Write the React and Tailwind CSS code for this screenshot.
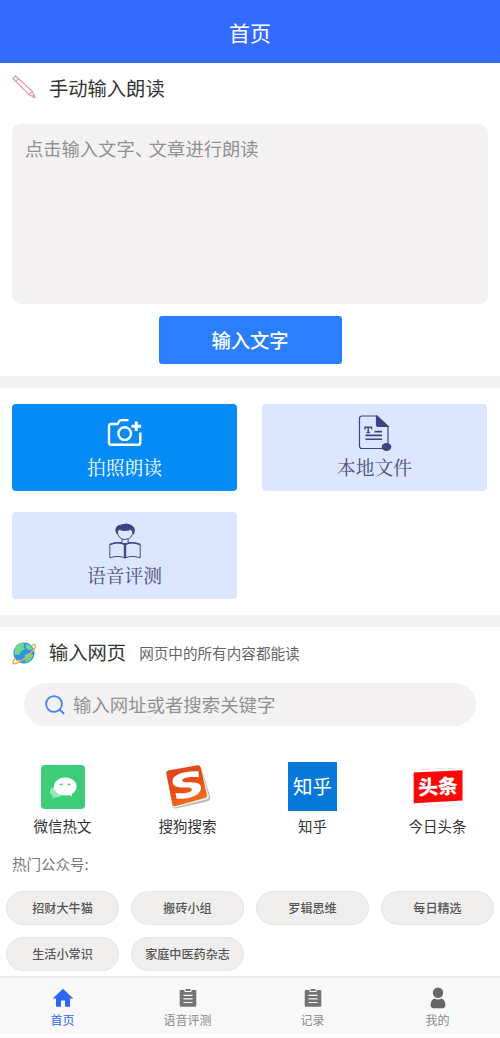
import React from 'react';

const PencilIcon = () => (
  <svg width="24" height="24" viewBox="0 0 24 24" fill="none" stroke="#e79aac" strokeWidth="1.2" strokeLinejoin="round">
    <path d="M1 3.500 3.500 1 20.500 16.500 23 22.500 17 19.700Z" />
    <path d="M3.800 6.300 6.400 3.700M17 19.700l3.500-3.200" />
    <path d="m21 20.500 2 2-2.600-.8z" fill="#d97f94" />
  </svg>
);

const CameraIcon = () => (
  <svg width="36" height="30" viewBox="0 0 36 30" fill="none" stroke="#fff" strokeWidth="2.4" strokeLinejoin="round">
    <path d="M21.500 2.100H14.200Q13 2.100 12.300 3.200L10.600 6H4.300Q2 6 2 8.300V24.500Q2 26.800 4.300 26.800H31Q33.300 26.800 33.300 24.500V14.500" />
    <circle cx="17.700" cy="15.600" r="6.300" />
    <path d="M29.300 3.500v9.500M24.500 8.200h9.600" strokeWidth="3" />
  </svg>
);

const FileIcon = () => (
  <svg width="34" height="36" viewBox="0 0 34 36" fill="none" stroke="#3f4384" strokeWidth="1.2">
    <path d="M19 1H4Q1.500 1 1.500 3.500V31Q1.500 33.500 4 33.500H30V11.500Z" />
    <path d="M18.500 1 30 11.500H20.500Q18.500 11.500 18.500 9.500Z" fill="#3f4384" />
    <path d="M7 14.500V12.200H13.500V14.500M10.200 12.200V17.500M8.500 17.500H12" strokeWidth="1.400" />
    <path d="M16.500 16.600H24M7.500 20.400H24M7.500 24.200H24" strokeWidth="1.600" />
    <ellipse cx="28.500" cy="32" rx="4.800" ry="4" fill="#3f4384" stroke="none" />
  </svg>
);

const ReaderIcon = () => (
  <svg width="32" height="36" viewBox="0 0 32 36" fill="none" stroke="#444886" strokeWidth="1">
    <path d="M8.300 8Q8.500 16 16 16.500Q23.500 16 24.200 8" />
    <path d="M7 8.500Q6 3 11.500 2.200Q18 -.5 22.500 2.500Q26.800 5 24.600 11.200Q24 7.500 21.800 6.600Q14 8.500 10.300 6.200Q8.300 7.500 8.200 11Z" fill="#3c3f86" />
    <path d="M13 16v3M19.200 16v3M10 19.500Q16 22 22 19.500" />
    <path d="M.8 21.500Q9.500 17.800 16 21.500Q22.500 17.800 31.200 21.500V34.800Q22.500 32 16 35Q9.500 32 .8 34.800Z" fill="#dce6fe" />
    <path d="M.8 21.500Q9.500 17.800 16 21.500Q22.500 17.800 31.200 21.500" strokeWidth="1.500" />
    <path d="M16 21.500V35" strokeWidth="2.400" />
  </svg>
);

const GlobeIcon = () => (
  <svg width="24" height="24" viewBox="0 0 24 24">
    <circle cx="12" cy="12" r="10.600" fill="#2b93ea" />
    <path d="M3 6.500 8 2 12.500 2.500 11.500 6 13 8 9 10.500 7 14 2.200 13.500Z" fill="#72d58d" />
    <path d="M14 3 18.500 4.500 21 8.500 16.500 9 13.500 6.500Z" fill="#72d58d" />
    <path d="M13 13.500 18 12 21.500 14 18.500 19.500 13.500 22 12.500 18Z" fill="#68cf98" />
    <path d="M20 4.500C24.500 1.500 25 5.500 20.500 10C15.500 15.500 8 21.500 3.500 22.500C-.5 23.500.5 20 3.500 17" fill="none" stroke="#e4b04c" strokeWidth="1.500" />
    <circle cx="6.500" cy="20" r="1.400" fill="#f2bf4f" />
  </svg>
);

const SearchIcon = () => (
  <svg width="20" height="20" viewBox="0 0 20 20" fill="none" stroke="#3f82f6" strokeWidth="1.800" strokeLinecap="round">
    <circle cx="9" cy="9" r="7.900" />
    <path d="m14.900 14.900 3.800 3.600" />
  </svg>
);

const WechatLogo = () => (
  <svg width="46" height="46" viewBox="0 0 46 46">
    <rect x="1" y="1" width="44" height="44" rx="4" fill="#3dcc77" />
    <path d="M15.500 22.500C11.500 23 9.800 25.500 10 28.200Q10.300 30.500 12.600 32L12.200 34.500 15.300 33.200Q19.500 33.800 22.500 31.200Q17.500 29 15.500 22.500Z" fill="#9be5b9" />
    <path d="M25.500 13.500C18.500 13.500 14 17.500 14 22.600C14 27.800 18.700 31.500 25.500 31.500Q27.700 31.500 29.500 31L32.200 32.600 31.800 30Q36.600 27.300 36.600 22.600C36.600 17.500 32 13.500 25.500 13.500Z" fill="#fff" />
    <path d="M19.800 21q1.300-1.700 2.600 0M27.800 21q1.300-1.700 2.600 0" fill="none" stroke="#3dcc77" strokeWidth="1.300" />
  </svg>
);

const SogouLogo = () => (
  <svg width="46" height="46" viewBox="0 0 46 46">
    <defs>
      <linearGradient id="sogou" x1="0" y1="0" x2="0.500" y2="1">
        <stop offset="0" stopColor="#d9481b" />
        <stop offset="0.600" stopColor="#ea4c12" />
        <stop offset="1" stopColor="#f2711f" />
      </linearGradient>
    </defs>
    <path d="M36 3 45.300 33Q45.500 36 43 37.200L11 44.600Q8 44.500 7 42Z" fill="#b9b7b7" />
    <path d="M35.500 2 44 32.500Q44 34.500 42 35.300L10.500 43.600Q8 43.800 7.300 41Z" fill="#f1efee" />
    <path d="M3 6.500 32.500 1.300Q35 1 35.600 3.200L42 31.300Q42.300 33.300 40.300 34L10 42.300Q7.800 42.600 7.300 40.200L1.300 9.500Q1 7 3 6.500Z" fill="url(#sogou)" />
    <path d="M33.500 7.300C20 6.500 8 10 7.500 17C7.200 22.500 13 23.800 19.500 23.500C25.500 23.200 27.300 24 26.800 26C26 28.800 18 30 10.500 29L11.500 34.500C24 35.800 35.700 31.500 36 24.300C36.100 19 31 18.300 24.500 18.300C18.500 18.400 17 17.700 17.300 16.300C18 13.600 25 12.400 33.800 13.300Z" fill="#fff" />
  </svg>
);

const ZhihuLogo = () => (
  <div className="flex h-[49px] w-[49px] items-center justify-center bg-[#0878d8] pb-0.5 text-[19.500px] leading-none text-white">知乎</div>
);

const ToutiaoLogo = () => (
  <svg width="50" height="40" viewBox="0 0 50 40">
    <path d="M8 2.300h10M23 1.500h8M35 1.500h7M8 38h10M23 38h8M35 38h7" stroke="#e4e4e4" strokeWidth="1.200" />
    <path d="M.7 5.500 49.500 3.200V33.500L.7 36.300Z" fill="#fc0606" />
    <text x="25" y="27" textAnchor="middle" fill="#fff" fontSize="20" fontWeight="900" transform="rotate(-3 25 20)">头条</text>
  </svg>
);

const HomeIcon = () => (
  <svg width="22" height="20" viewBox="0 0 22 20" fill="#2f66f6">
    <path d="M11 .8 21.300 10.500H18V18.800H13V12.500H9V18.800H4V10.500H.7Z" />
  </svg>
);

const ClipboardIcon = () => (
  <svg width="18" height="20" viewBox="0 0 18 20">
    <path d="M2 2H5.500V4H12.500V2H16Q17.300 2 17.300 3.300V17.500Q17.300 18.800 16 18.800H2Q.7 18.800.7 17.500V3.300Q.7 2 2 2Z" fill="#747474" />
    <path d="M6.500 1H11.500V3H6.500Z" fill="#747474" />
    <path d="M4.500 7.300H13.500M4.500 10.900H13.500M4.500 14.500H13.500" stroke="#f7f7f7" strokeWidth="1.200" />
  </svg>
);

const UserIcon = () => (
  <svg width="18" height="22" viewBox="0 0 18 22" fill="#666">
    <circle cx="9" cy="5.700" r="5.200" />
    <path d="M5.500 11.500Q9 13.300 12.500 11.500Q16.400 13.300 16.400 18.200Q16.400 21.300 12.500 21.300H5.500Q1.600 21.300 1.600 18.200Q1.600 13.300 5.500 11.500Z" />
  </svg>
);

const actions = [
  { label: '拍照朗读', icon: CameraIcon, active: true },
  { label: '本地文件', icon: FileIcon },
  { label: '语音评测', icon: ReaderIcon },
];

const sites = [
  { label: '微信热文', logo: WechatLogo },
  { label: '搜狗搜索', logo: SogouLogo },
  { label: '知乎', logo: ZhihuLogo },
  { label: '今日头条', logo: ToutiaoLogo },
];

const accounts = ['招财大牛猫', '搬砖小组', '罗辑思维', '每日精选', '生活小常识', '家庭中医药杂志'];

const tabs = [
  { label: '首页', icon: HomeIcon, active: true },
  { label: '语音评测', icon: ClipboardIcon },
  { label: '记录', icon: ClipboardIcon },
  { label: '我的', icon: UserIcon },
];

export default function App() {
  return (
    <div className="flex h-[1038px] w-[500px] flex-col overflow-hidden bg-white font-['Noto_Sans_CJK_SC',sans-serif] text-[#333]">
      <header className="flex h-[63px] shrink-0 items-center justify-center bg-[#336aff] pt-[3px] text-[21px] text-white">
        首页
      </header>

      {/* Manual input */}
      <section className="flex h-[313px] shrink-0 flex-col px-3">
        <div className="flex h-[61px] items-start pt-3">
          <PencilIcon />
          <h2 className="ml-[13px] text-[19.300px] leading-[26px]">手动输入朗读</h2>
        </div>
        <div className="h-[180px] rounded-[9px] bg-[#f3f1f2] px-[13px] pt-2.5 text-[18.300px] leading-7 text-[#919191]">
          点击输入文字<span className="mr-[5px] [font-feature-settings:'halt']">、</span>文章进行朗读
        </div>
        <button className="mx-auto mt-3 h-[48px] w-[183px] rounded-[3px] bg-[#2b7fff] text-[19.300px] font-medium text-white">
          输入文字
        </button>
      </section>

      <div className="h-3 shrink-0 bg-[#f4f3f2]" />

      <section className="grid h-[227px] shrink-0 grid-cols-[225px_225px] content-start gap-x-[25px] gap-y-[21px] px-3 pt-4">
        {actions.map(({ label, icon: Icon, active }) => (
          <div
            key={label}
            className={`flex h-[87px] flex-col items-center rounded-[4px] ${active ? 'bg-[#058bf5] text-white' : 'bg-[#dce6fe] text-[#4b4e7c]'}`}
          >
            <div className="mt-2.5 flex h-[38px] items-center justify-center">
              <Icon />
            </div>
            <span className="font-['Noto_Serif_CJK_SC','Noto_Serif_SC','Noto_Sans_CJK_SC',serif] text-[18.800px] leading-[30px]">
              {label}
            </span>
          </div>
        ))}
      </section>

      <div className="h-3 shrink-0 bg-[#f4f3f2]" />

      {/* Web page input */}
      <section className="flex-1">
        <div className="flex h-[56px] items-center pb-[5px] pl-3">
          <GlobeIcon />
          <h2 className="ml-[13px] text-[19.300px]">输入网页</h2>
          <span className="ml-[13px] text-[14.600px] text-[#666]">网页中的所有内容都能读</span>
        </div>
        <div className="mx-6 flex h-[43px] items-center rounded-full bg-[#f3f1f2] pl-[21px] text-[18.400px] text-[#919191]">
          <SearchIcon />
          <span className="ml-2">输入网址或者搜索关键字</span>
        </div>
        <div className="mt-[35px] grid grid-cols-4">
          {sites.map(({ label, logo: Logo }) => (
            <div key={label} className="flex flex-col items-center">
              <div className="flex h-[51px] items-center">
                <Logo />
              </div>
              <span className="mt-[3px] mb-px text-[14.500px] leading-[22px]">{label}</span>
            </div>
          ))}
        </div>
        <p className="mt-4 pl-3 text-[14.500px] leading-[20px] text-[#777]">热门公众号:</p>
        <div className="mt-[17px] grid grid-cols-4 gap-y-3">
          {accounts.map((name) => (
            <span
              key={name}
              className="mx-auto flex h-[34px] w-[113px] items-center justify-center rounded-full border border-[#e7e6e5] bg-[#efeeec] text-[12.100px] font-medium text-[#555]"
            >
              {name}
            </span>
          ))}
        </div>
      </section>

      <nav className="mb-[5px] grid h-[57px] shrink-0 grid-cols-4 border-t-2 border-[#ececec] bg-[#f8f8f8]">
        {tabs.map(({ label, icon: Icon, active }) => (
          <div key={label} className={`flex flex-col items-center pt-2 ${active ? 'text-[#2f66f6]' : 'text-[#8a8a8a]'}`}>
            <div className="flex h-[24px] items-center">
              <Icon />
            </div>
            <span className="mt-px text-[12px] leading-[18px]">{label}</span>
          </div>
        ))}
      </nav>
    </div>
  );
}
